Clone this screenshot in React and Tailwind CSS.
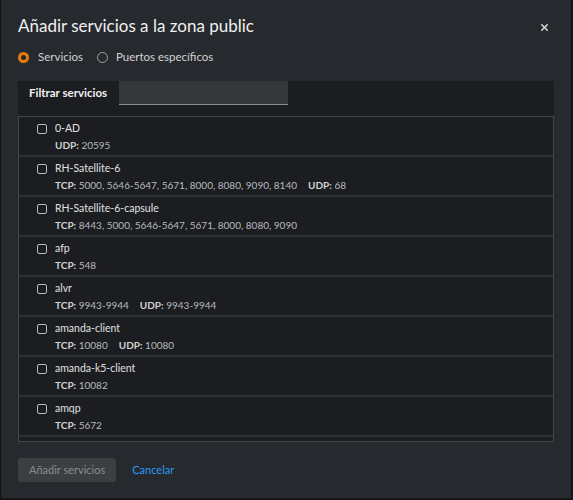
import { X } from 'lucide-react';

const services = [
  { name: '0-AD', ports: [['UDP', '20595']] },
  { name: 'RH-Satellite-6', ports: [['TCP', '5000, 5646-5647, 5671, 8000, 8080, 9090, 8140'], ['UDP', '68']] },
  { name: 'RH-Satellite-6-capsule', ports: [['TCP', '8443, 5000, 5646-5647, 5671, 8000, 8080, 9090']] },
  { name: 'afp', ports: [['TCP', '548']] },
  { name: 'alvr', ports: [['TCP', '9943-9944'], ['UDP', '9943-9944']] },
  { name: 'amanda-client', ports: [['TCP', '10080'], ['UDP', '10080']] },
  { name: 'amanda-k5-client', ports: [['TCP', '10082']] },
  { name: 'amqp', ports: [['TCP', '5672']] },
];

export default function App() {
  return (
    <div
      className="w-[573px] h-[500px] bg-[#151515] pl-[1px] pr-[2px] pb-[2px] overflow-hidden"
      style={{ fontFamily: 'Lato, "Liberation Sans", sans-serif' }}
    >
      <div className="h-full bg-[#26292d] px-[17px] flex flex-col">
        {/* Header */}
        <div className="flex items-center justify-between pt-[13px]">
          <h1 className="text-[17px] leading-[26px] text-[#f0f0f0]">
            Añadir servicios a la zona public
          </h1>
          <X className="w-[11px] h-[11px] text-[#d2d2d2] mr-[4px] mt-[2px]" strokeWidth={3.5} />
        </div>

        {/* Radios */}
        <div className="flex items-center gap-[14px] mt-[9px] h-[18px] text-[11.5px] text-[#d2d2d2]">
          <label className="flex items-center gap-[9px]">
            <span className="w-[11px] h-[11px] rounded-full bg-[#ec7a08] flex items-center justify-center">
              <span className="w-[5px] h-[5px] rounded-full bg-[#26292d]" />
            </span>
            Servicios
          </label>
          <label className="flex items-center gap-[8px]">
            <span className="w-[11px] h-[11px] rounded-full border-[1.5px] border-[#a0a0a0]" />
            Puertos específicos
          </label>
        </div>

        {/* Panel */}
        <div className="mt-[15px] bg-[#1b1d21] flex flex-col h-[361px]">
          <div className="flex h-[35px]">
            <div className="w-[101px] h-[24px] flex items-center pl-[11px] text-[11.5px] font-bold text-[#f0f0f0] whitespace-nowrap">
              Filtrar servicios
            </div>
            <div className="w-[169px] h-[24px] bg-[#36373a] border-b border-[#8a8d90]" />
          </div>
          <div className="flex-1 border border-[#444548] overflow-hidden">
            {services.map((s) => (
              <div key={s.name} className="flex h-[40px] border-b-[2px] border-[#2e3034]">
                <div className="w-[36px] flex justify-end pt-[7px] pr-[8px]">
                  <span className="w-[10px] h-[10px] rounded-[2px] border-[1.5px] border-[#b8bbbe]" />
                </div>
                <div className="flex flex-col pt-[3px]">
                  <span className="text-[10.5px] leading-[17px] text-[#e0e0e0]">{s.name}</span>
                  <span className="text-[10px] leading-[16px] text-[#b8bbbe] flex gap-[11px] whitespace-nowrap">
                    {s.ports.map(([proto, val]) => (
                      <span key={proto}>
                        <span className="font-bold text-[#d2d2d2]">{proto}:</span> {val}
                      </span>
                    ))}
                  </span>
                </div>
              </div>
            ))}
            {/* next row, scrolled out of view */}
            <div className="h-[2px]" />
          </div>
        </div>

        {/* Footer */}
        <div className="flex items-center gap-[16px] mt-[16px]">
          <button className="h-[24px] px-[11px] rounded-[3px] bg-[#3c3f42] text-[11px] text-[#8a8d90] whitespace-nowrap">
            Añadir servicios
          </button>
          <button className="text-[11px] text-[#2b9af3] whitespace-nowrap">Cancelar</button>
        </div>
      </div>
    </div>
  );
}
